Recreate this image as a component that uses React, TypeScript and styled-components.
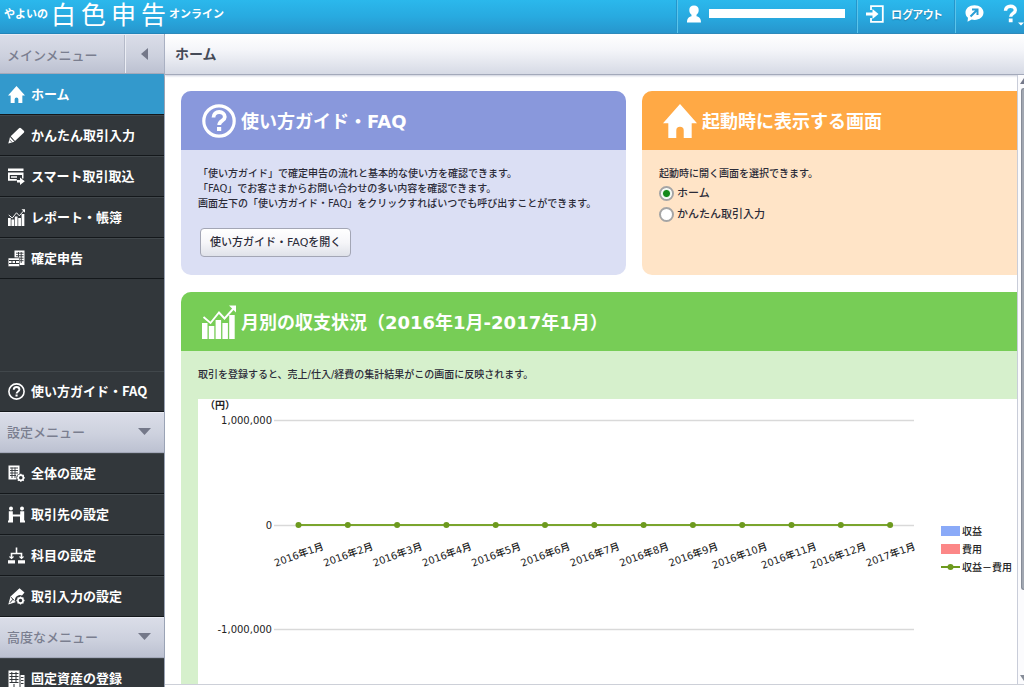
import React from 'react';
import styled, { createGlobalStyle, css } from 'styled-components';

const GlobalStyle = createGlobalStyle`
  *, *::before, *::after { box-sizing: border-box; }
  html, body, #root { height: 100%; }
  body {
    margin: 0;
    overflow: hidden;
    background: #fff;
    color: #2b2b38;
    font-family: "DejaVu Sans", "Noto Sans CJK JP", sans-serif;
    font-size: 10px;
    line-height: 15px;
  }
  button, input { font-family: inherit; margin: 0; }
  h1, h2, p, ul { margin: 0; padding: 0; }
  ul { list-style: none; }
`;

const uiFont = css`
  font-family: "Noto Sans CJK JP", sans-serif;
`;

const Shell = styled.div`
  display: flex;
  flex-direction: column;
  height: 100vh;
`;

/* ---------- Top bar ---------- */

const TopBar = styled.header`
  ${uiFont}
  flex: none;
  display: flex;
  justify-content: space-between;
  height: 34px;
  color: #fff;
  background: linear-gradient(#2bb8ec, #28aae0 50%, #2796cd);
  border-bottom: 1px solid #2385b9;
`;

const Brand = styled.a`
  display: flex;
  align-items: center;
  height: 27px;
  padding-left: 4px;
  color: #fff;
  text-decoration: none;
`;

const BrandSmall = styled.span`
  font-size: 11px;
  font-weight: 700;
`;

const BrandLarge = styled.span`
  display: flex;
  gap: 5px;
  margin: 0 3px;
  font-size: 25px;
  line-height: 27px;
  font-weight: 400;
`;

const Tools = styled.nav`
  display: flex;
`;

const Tool = styled.button<{ $width: number }>`
  ${uiFont}
  display: flex;
  align-items: center;
  gap: 7px;
  width: ${(p) => p.$width}px;
  height: 33px;
  padding: 0 0 6px 8px;
  border: 0;
  border-left: 1px solid #5cc4ea;
  box-shadow: -1px 0 0 #2596cb;
  background: none;
  color: #fff;
  font-size: 11px;
  font-weight: 700;
  font-feature-settings: "palt";
  text-shadow: 0 1px 1px #1a78a8;
  white-space: nowrap;
  svg { flex: none; }
`;

const HelpTool = styled(Tool)`
  padding-bottom: 4px;
  border-left: 0;
  box-shadow: none;
`;

const Mask = styled.span`
  width: 136px;
  height: 9px;
  background: #fff;
`;

/* ---------- Side menu ---------- */

const Columns = styled.div`
  flex: 1;
  min-height: 0;
  display: flex;
`;

const Side = styled.nav`
  ${uiFont}
  flex: 0 0 165px;
  display: flex;
  flex-direction: column;
  overflow: hidden;
  background: #32373b;
  border-right: 1px solid #9aa3b5;
`;

const SectionHead = styled.button`
  ${uiFont}
  flex: none;
  display: flex;
  align-items: center;
  justify-content: space-between;
  height: 41px;
  padding: 0 13px 2px 7px;
  border: 0;
  border-top: 1px solid #e9ebf3;
  border-bottom: 1px solid #a4a9ba;
  background: linear-gradient(#dadde8, #cdd1de 55%, #bcc1d1);
  color: #7a7e8f;
  font-size: 13px;
  font-weight: 500;
  text-align: left;
`;

const MainHead = styled(SectionHead)`
  height: 40px;
  padding: 0 0 0 7px;
`;

const Collapse = styled.span`
  display: flex;
  align-items: center;
  justify-content: center;
  align-self: stretch;
  width: 39px;
  padding-right: 2px;
  border-left: 1px solid #eceef5;
  box-shadow: -1px 0 0 #b5bac9;
`;

const MenuItem = styled.a<{ $active?: boolean }>`
  flex: none;
  display: flex;
  align-items: center;
  gap: 6px;
  height: 41px;
  padding-left: 8px;
  color: #fff;
  font-size: 13px;
  font-weight: 700;
  line-height: 20px;
  text-decoration: none;
  white-space: nowrap;
  background: ${(p) => (p.$active ? '#3399cc' : '#32373b')};
  border-top: 1px solid ${(p) => (p.$active ? '#3399cc' : '#41474b')};
  border-bottom: 1px solid #14181b;
  svg { flex: none; }
`;

const MenuLabel = styled.span`
  padding-bottom: 2px;
`;

const Spacer = styled.div`
  flex: 0 0 92px;
`;

/* ---------- Main area ---------- */

const Main = styled.main`
  flex: 1;
  min-width: 0;
  display: flex;
  flex-direction: column;
`;

const PageTitle = styled.h1`
  ${uiFont}
  flex: none;
  height: 41px;
  padding: 0 10px;
  font-size: 14px;
  font-weight: 700;
  line-height: 38px;
  color: #454a57;
  background: linear-gradient(#fff, #f4f5f9 40%, #d6dae5);
  border-bottom: 1px solid #a3a9ba;
  box-shadow: 0 1px 2px #c9cddb;
`;

const Viewport = styled.div`
  flex: 1;
  min-height: 0;
  display: flex;
  margin-bottom: 2px;
  border-bottom: 1px solid #cdd0d8;
`;

const Pane = styled.div`
  flex: 1;
  min-width: 0;
  overflow: hidden;
  display: flex;
  flex-direction: column;
  gap: 17px;
  padding: 16px 0 0 16px;
`;

const Scroll = styled.div`
  flex: 0 0 7px;
  overflow: hidden;
  display: flex;
  flex-direction: column;
  justify-content: space-between;
  align-items: flex-end;
  padding: 3px 0;
  border-left: 1px solid #c9cdd9;
  background: #fbfbfd;
`;

const Track = styled.div`
  flex: 1;
  align-self: stretch;
  padding: 4px 0 3px 3px;
`;

const Thumb = styled.div`
  height: 86%;
  border: 1px solid #868c98;
  border-right: 0;
  border-radius: 3px 0 0 3px;
  background: #a1a7b1;
`;

const CardRow = styled.div`
  flex: none;
  display: flex;
  gap: 16px;
`;

type Tone = 'blue' | 'orange' | 'green';
const tones: Record<Tone, { head: string; body: string }> = {
  blue: { head: '#8998dc', body: '#dbdff4' },
  orange: { head: '#ffa945', body: '#ffe4c7' },
  green: { head: '#77cd56', body: '#d6f0cc' },
};

const Card = styled.section<{ $tone: Tone; $open?: boolean }>`
  flex: ${(p) => (p.$open ? '1' : '0 0 445px')};
  min-width: 0;
  overflow: hidden;
  border-radius: ${(p) => (p.$open ? '10px 0 0 10px' : '10px')};
  background: ${(p) => tones[p.$tone].body};
`;

const ChartCard = styled(Card)`
  flex: none;
`;

const CardHead = styled.div<{ $tone: Tone }>`
  display: flex;
  align-items: center;
  gap: 5px;
  height: 59px;
  padding-left: 21px;
  color: #fff;
  background: ${(p) => tones[p.$tone].head};
`;

const CardTitle = styled.h2`
  padding-top: 3px;
  font-size: 18px;
  line-height: 24px;
  font-weight: 700;
  white-space: nowrap;
`;

const CardBody = styled.div`
  padding: 16px 17px 18px;
  font-weight: 500;
`;

const GuideButton = styled.button`
  display: block;
  height: 29px;
  margin: 17px 0 0 2px;
  padding: 0 9px 3px;
  border: 1px solid #a3a6b5;
  border-radius: 4px;
  background: linear-gradient(#fff, #f6f6f9 50%, #dfe2e9);
  color: #2b2b38;
  font-size: 11px;
  font-weight: 500;
  white-space: nowrap;
`;

const Choice = styled.label`
  display: flex;
  align-items: center;
  gap: 3px;
  margin-top: 4px;
  font-size: 11px;
  line-height: 17px;
`;

const Radio = styled.input`
  appearance: none;
  width: 15px;
  height: 15px;
  border: 2px solid #a5a5a5;
  border-radius: 50%;
  background: #fff;
  &:checked {
    background: radial-gradient(circle, #13891a 0 3px, #e6f5e6 4px, #fff 5px);
  }
`;

const ChartPanel = styled.div`
  display: flex;
  margin: 17px -17px 0 0;
  background: #fff;
  svg { flex: none; }
  text { font-size: 10px; fill: #222; }
`;

const Legend = styled.ul`
  padding: 123px 0 0 17px;
  color: #222;
`;

const LegendItem = styled.li`
  display: flex;
  align-items: center;
  gap: 2px;
  height: 18px;
  white-space: nowrap;
`;

/* ---------- Icons ---------- */

const HomeIcon = ({ size = 17 }: { size?: number }) => (
  <svg width={size} height={size} viewBox="0 0 32 32" fill="#fff">
    <path d="M16 0 32 18H27V32H19.500V25a3.500 3.500 0 0 0-7 0v7H5V18H0Z" />
  </svg>
);

const QuestionIcon = ({ size = 17 }: { size?: number }) => (
  <svg width={size} height={size} viewBox="0 0 34 34" fill="none" stroke="#fff">
    <circle cx="17" cy="17" r="15.200" strokeWidth="3.200" />
    <path d="M11.500 13.500c0-3.500 2.500-5.500 5.700-5.500s5.600 2 5.600 4.900c0 3.800-5.600 4-5.600 8.100" strokeWidth="3.800" />
    <path d="M15 23h4.200v4H15z" fill="#fff" stroke="none" />
  </svg>
);

const GraphIcon = ({ size = 17 }: { size?: number }) => (
  <svg width={size} height={size} viewBox="0 0 34 34" fill="#fff">
    <path d="M0 18h5.500v16H0zM6.800 21h5.500v13H6.800zM13.600 15h5.500v19h-5.500zM20.400 18h5.500v16h-5.500zM27.200 10h5.500v24h-5.500z" />
    <path d="m1.500 12 7 6L17 7.500l5.500 6L32 3" fill="none" stroke="#fff" strokeWidth="1.900" />
    <path d="M27 .5h7V7.500z" />
  </svg>
);

const PencilIcon = () => (
  <svg width="17" height="17" viewBox="0 0 17 17" fill="#fff">
    <path d="M11 1.200Q12 .3 13 1.200l2.800 2.600q1 1 0 2L7 14 2.700 9.300zM2 10l4.400 4.800L.3 16.600z" />
    <path d="M1.600 12.800 3.900 15.200" stroke="#32373b" strokeWidth=".7" />
  </svg>
);

const CardImportIcon = () => (
  <svg width="17" height="17" viewBox="0 0 17 17" fill="#fff">
    <path d="M0 .5h15.500v2.500H0zM0 4.500h15.500v6H14V7H1.800v4h7v1.800H0z" />
    <path d="M3 8.300h6v1.400H3zM9 12h3V9.500l4.800 3.700-4.800 3.700v-2.400H9z" />
  </svg>
);

const TaxIcon = () => (
  <svg width="17" height="17" viewBox="0 0 17 17">
    <path d="M6.500.5h10V15h-5V7.500h-5z" fill="#fff" />
    <path d="M8 3.200h7.500M8 5.700h7.500M11.500 8.200h4M12 10.700h3.500M10.500 2v5M13.200 2v11" stroke="#32373b" strokeWidth=".9" />
    <path d="M.2 8h11.300v8.500H.2z" fill="#fff" stroke="#32373b" strokeWidth=".5" />
    <path d="M1 10.500h10M1 13.500h10M4 10v3.500M7.500 10v3.500" stroke="#32373b" />
  </svg>
);

const SheetGearIcon = () => (
  <svg width="17" height="17" viewBox="0 0 17 17">
    <path d="M.5.500h11v8a5 5 0 0 0-3 6H.5z" fill="#fff" />
    <path d="M2 3h8M2 5.500h8M2 8h8M2 10.500h6M4 2.500V13M7 2.500V13" stroke="#32373b" strokeWidth=".9" />
    <circle cx="12.800" cy="12.800" r="2.600" fill="none" stroke="#fff" strokeWidth="1.700" />
    <path d="M12.800 8.700v1.500M12.800 15.300v1.500M8.700 12.800h1.500M15.300 12.800h1.500M9.900 9.900l1 1M14.700 14.700l1 1M15.700 9.900l-1 1M10.900 14.700l-1 1" stroke="#fff" strokeWidth="1.300" />
  </svg>
);

const PartnersIcon = () => (
  <svg width="17" height="17" viewBox="0 0 17 17" fill="#fff">
    <circle cx="3" cy="2.500" r="2" />
    <circle cx="14" cy="2.500" r="2" />
    <path d="M.8 5.300h4V8.500h7.400V5.300h4v9.200h.8v2h-5V10.500H5v6H0v-2h.8z" />
  </svg>
);

const TreeIcon = () => (
  <svg width="17" height="17" viewBox="0 0 17 17" fill="none" stroke="#fff">
    <path d="M8.500 .5v6M3.500 11V6.500h10V11" strokeWidth="1.600" />
    <path d="m1.500 9.500 2 2 2-2M11.500 9.500l2 2 2-2" strokeWidth="1.200" />
    <path d="M0 13.200h7v3.300H0zM10 13.200h7v3.300h-7z" fill="#fff" stroke="none" />
  </svg>
);

const PencilGearIcon = () => (
  <svg width="17" height="17" viewBox="0 0 17 17">
    <path d="M11.500.3 16.500 4.500 14 7.500a5 5 0 0 0-6.500 6.700L.3 16.600 2.500 8.500z" fill="#fff" />
    <path d="m2 14.700 3-3.500M3 9.300l3.500 3.400" stroke="#32373b" />
    <circle cx="12.500" cy="12.500" r="2.600" fill="#32373b" stroke="#fff" strokeWidth="1.700" />
    <path d="M12.500 8.400v1.500M12.500 15v1.500M8.400 12.500h1.500M15 12.500h1.500M9.600 9.600l1 1M14.400 14.400l1 1M15.400 9.600l-1 1M10.600 14.400l-1 1" stroke="#fff" strokeWidth="1.300" />
  </svg>
);

const BuildingIcon = () => (
  <svg width="17" height="17" viewBox="0 0 17 17">
    <path d="M.5.500h11V17H.5zM12.500 5h4v12h-4z" fill="#fff" />
    <path d="M1.500 3.500h9M1.500 6.500h9M1.500 9.500h9M1.500 12.500h9M3.800 2v11M8 2v11M13 7.500h2.500M13 10.500h2.500M13 13.500h2.500M6 14v3" stroke="#32373b" />
  </svg>
);

const UserIcon = () => (
  <svg width="16" height="18" viewBox="0 0 16 18" fill="#fff">
    <path d="M8 .5c3 0 4.700 1.700 4.700 4.500 0 2-.7 3.600-2.200 4.700v1.500c3 .8 4.500 2.300 4.500 6.300H1c0-4 1.500-5.500 4.500-6.300V9.700C4 8.600 3.300 7 3.300 5 3.300 2.200 5 .5 8 .5Z" />
  </svg>
);

const LogoutIcon = () => (
  <svg width="18" height="18" viewBox="0 0 18 18" fill="none" stroke="#fff">
    <path d="M5 5V1.200h11.800v15.600H5V13" strokeWidth="1.800" />
    <path d="M0 7.500h6.500V4l6 5-6 5v-3.500H0z" fill="#fff" stroke="none" />
  </svg>
);

const BalloonIcon = () => (
  <svg width="20" height="17" viewBox="0 0 20 17">
    <path d="M10.500.3c5.200 0 9 3.200 9 7.300s-3.800 7.400-9 7.400c-1 0-1.900-.1-2.800-.4L3.500 16.700l.5-3.900C2.300 11.500 1.500 9.800 1.500 7.600c0-4.100 3.800-7.300 9-7.300Z" fill="#fff" />
    <path d="M6.500 11.500 13 5M8 4.500h5.500V10" fill="none" stroke="#2a9fd6" strokeWidth="2" />
  </svg>
);

const HelpIcon = () => (
  <svg width="21" height="22" viewBox="0 0 21 22">
    <path d="M2.500 6.800C2.500 3.800 4.700 2.200 7.500 2.200s4.800 1.500 4.800 4c0 3.200-4.600 3.300-4.600 6.600" fill="none" stroke="#fff" strokeWidth="3.400" />
    <path d="M5.800 14.600h3.800v3.600H5.800zM15 18.500h6L18 21.500z" fill="#fff" />
  </svg>
);

const Triangle = ({ dir }: { dir: 'down' | 'left' | 'up' }) => {
  const shapes = {
    down: { w: 13, h: 7, d: 'M0 0h13L6.500 7z' },
    left: { w: 7, h: 12, d: 'M7 0v12L0 6z' },
    up: { w: 4, h: 6, d: 'M4 0v6H0z' },
  };
  const s = shapes[dir];
  return (
    <svg width={s.w} height={s.h} viewBox={`0 0 ${s.w} ${s.h}`} fill="#747889">
      <path d={s.d} />
    </svg>
  );
};

const ScrollDown = () => (
  <svg width="4" height="6" viewBox="0 0 4 6" fill="#868c98">
    <path d="M0 0h4v6z" />
  </svg>
);

/* ---------- Data ---------- */

const mainMenu = [
  { label: 'ホーム', icon: <HomeIcon />, active: true },
  { label: 'かんたん取引入力', icon: <PencilIcon /> },
  { label: 'スマート取引取込', icon: <CardImportIcon /> },
  { label: 'レポート・帳簿', icon: <GraphIcon /> },
  { label: '確定申告', icon: <TaxIcon /> },
];

const settingsMenu = [
  { label: '全体の設定', icon: <SheetGearIcon /> },
  { label: '取引先の設定', icon: <PartnersIcon /> },
  { label: '科目の設定', icon: <TreeIcon /> },
  { label: '取引入力の設定', icon: <PencilGearIcon /> },
];

const months = [
  ...Array.from({ length: 12 }, (_, i) => `2016年${i + 1}月`),
  '2017年1月',
];

const Chart = () => {
  const x = (i: number) => 100.5 + i * 49.3;
  return (
    <svg width="726" height="320" viewBox="0 0 726 320" role="img" aria-label="月別の収支">
      <text x="7" y="10" fontWeight="700">（円）</text>
      {[['1,000,000', 21], ['0', 126], ['-1,000,000', 230]].map(([label, y]) => (
        <g key={label}>
          <path d={`M76 ${Number(y) + 0.5}H716`} stroke="#d9d9d9" strokeWidth="1.500" />
          <text x="74" y={Number(y) + 4} textAnchor="end">{label}</text>
        </g>
      ))}
      <path d={`M${x(0)} 126H${x(12)}`} stroke="#7aa52e" strokeWidth="2" />
      {months.map((m, i) => (
        <g key={m}>
          <circle cx={x(i)} cy="126" r="3" fill="#6d9a1e" />
          <text
            x={x(i) + 26}
            y="150"
            textAnchor="end"
            fontWeight="500"
            transform={`rotate(-20 ${x(i) + 26} 150)`}
          >
            {m}
          </text>
        </g>
      ))}
    </svg>
  );
};

const Swatch = ({ color }: { color: string }) => (
  <svg width="19" height="10">
    <rect width="19" height="10" fill={color} />
  </svg>
);

export default function App() {
  return (
    <Shell>
      <GlobalStyle />
      <TopBar>
        <Brand href="#">
          <BrandSmall>やよいの</BrandSmall>
          <BrandLarge>
            {[...'白色申告'].map((c) => (
              <span key={c}>{c}</span>
            ))}
          </BrandLarge>
          <BrandSmall>オンライン</BrandSmall>
        </Brand>
        <Tools>
          <Tool $width={180} aria-label="アカウント">
            <UserIcon />
            <Mask />
          </Tool>
          <Tool $width={98}>
            <LogoutIcon />
            ログアウト
          </Tool>
          <Tool $width={40} aria-label="お知らせ">
            <BalloonIcon />
          </Tool>
          <HelpTool $width={29} aria-label="ヘルプ">
            <HelpIcon />
          </HelpTool>
        </Tools>
      </TopBar>

      <Columns>
        <Side>
          <MainHead>
            メインメニュー
            <Collapse>
              <Triangle dir="left" />
            </Collapse>
          </MainHead>
          {mainMenu.map((m) => (
            <MenuItem key={m.label} href="#" $active={m.active}>
              {m.icon}
              <MenuLabel>{m.label}</MenuLabel>
            </MenuItem>
          ))}
          <Spacer />
          <MenuItem href="#">
            <QuestionIcon />
            <MenuLabel>使い方ガイド・FAQ</MenuLabel>
          </MenuItem>
          <SectionHead>
            設定メニュー
            <Triangle dir="down" />
          </SectionHead>
          {settingsMenu.map((m) => (
            <MenuItem key={m.label} href="#">
              {m.icon}
              <MenuLabel>{m.label}</MenuLabel>
            </MenuItem>
          ))}
          <SectionHead>
            高度なメニュー
            <Triangle dir="down" />
          </SectionHead>
          <MenuItem href="#">
            <BuildingIcon />
            <MenuLabel>固定資産の登録</MenuLabel>
          </MenuItem>
        </Side>

        <Main>
          <PageTitle>ホーム</PageTitle>
          <Viewport>
            <Pane>
              <CardRow>
                <Card $tone="blue">
                  <CardHead $tone="blue">
                    <QuestionIcon size={34} />
                    <CardTitle>使い方ガイド・FAQ</CardTitle>
                  </CardHead>
                  <CardBody>
                    <p>「使い方ガイド」で確定申告の流れと基本的な使い方を確認できます。</p>
                    <p>「FAQ」でお客さまからお問い合わせの多い内容を確認できます。</p>
                    <p>画面左下の「使い方ガイド・FAQ」をクリックすればいつでも呼び出すことができます。</p>
                    <GuideButton>使い方ガイド・FAQを開く</GuideButton>
                  </CardBody>
                </Card>
                <Card $tone="orange" $open>
                  <CardHead $tone="orange">
                    <HomeIcon size={34} />
                    <CardTitle>起動時に表示する画面</CardTitle>
                  </CardHead>
                  <CardBody>
                    <p>起動時に開く画面を選択できます。</p>
                    <Choice>
                      <Radio type="radio" name="start" defaultChecked />
                      ホーム
                    </Choice>
                    <Choice>
                      <Radio type="radio" name="start" />
                      かんたん取引入力
                    </Choice>
                  </CardBody>
                </Card>
              </CardRow>
              <ChartCard $tone="green" $open>
                <CardHead $tone="green">
                  <GraphIcon size={34} />
                  <CardTitle>月別の収支状況（2016年1月-2017年1月）</CardTitle>
                </CardHead>
                <CardBody>
                  <p>取引を登録すると、売上/仕入/経費の集計結果がこの画面に反映されます。</p>
                  <ChartPanel>
                    <Chart />
                    <Legend>
                      <LegendItem>
                        <Swatch color="#8aaaf8" />
                        収益
                      </LegendItem>
                      <LegendItem>
                        <Swatch color="#fc8787" />
                        費用
                      </LegendItem>
                      <LegendItem>
                        <svg width="19" height="10">
                          <path d="M0 5h19" stroke="#6d9a1e" strokeWidth="2" />
                          <circle cx="9.500" cy="5" r="3" fill="#6d9a1e" />
                        </svg>
                        収益－費用
                      </LegendItem>
                    </Legend>
                  </ChartPanel>
                </CardBody>
              </ChartCard>
            </Pane>
            <Scroll>
              <Triangle dir="up" />
              <Track>
                <Thumb />
              </Track>
              <ScrollDown />
            </Scroll>
          </Viewport>
        </Main>
      </Columns>
    </Shell>
  );
}
